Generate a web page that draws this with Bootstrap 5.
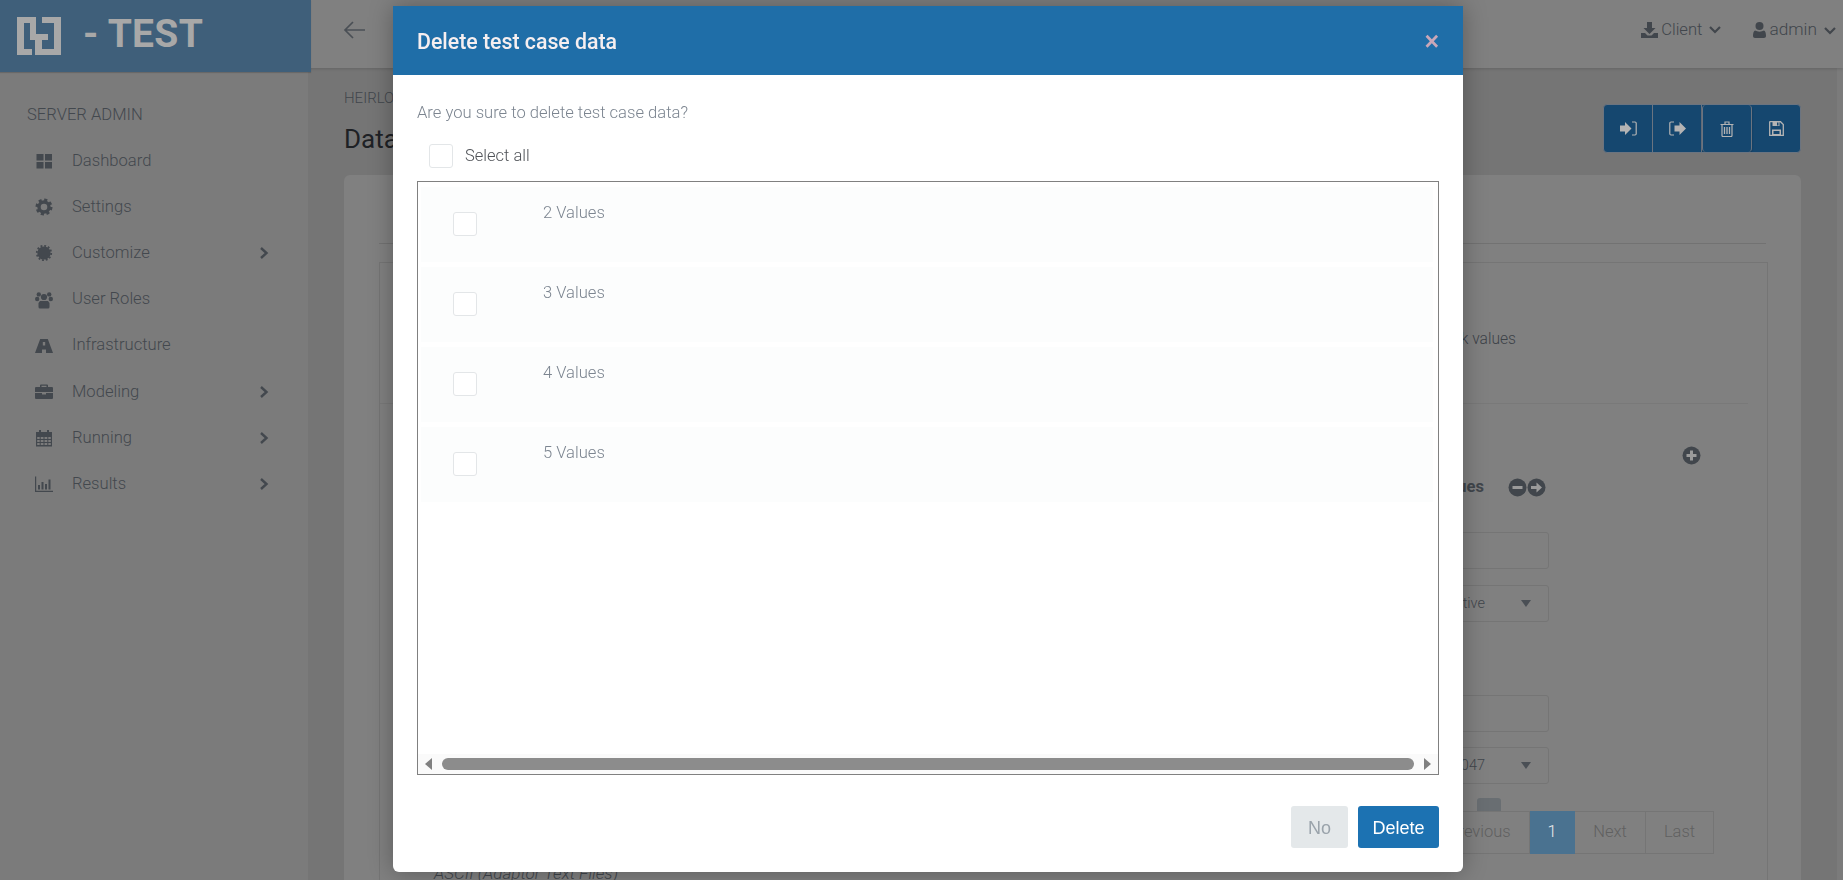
<!DOCTYPE html>
<html lang="en">
<head>
<meta charset="utf-8">
<title>Delete test case data</title>
<link rel="stylesheet" href="https://cdn.jsdelivr.net/npm/bootstrap@5.3.0/dist/css/bootstrap.min.css">
<style>
html,body{height:100%;overflow:hidden}
body{font-family:Roboto,"Liberation Sans",sans-serif;font-weight:300;background:#757575;color:#41464c;font-size:16.5px}
.shell{height:880px;width:1843px}
.leftcol{width:308px;flex:none;background:#7b7b7b;position:relative;z-index:2}
.brandbar{width:311px;height:72px;background:#3f5f7a;padding:0 0 4px 17px;gap:22px;box-shadow:0 1px 1px rgba(0,0,0,.15)}
.brandbar .brandtxt{font-family:Roboto,"Liberation Sans",sans-serif;font-weight:700;font-size:39px;line-height:1;white-space:nowrap;color:#a8a8a8;letter-spacing:.3px}
.logomark{margin-top:4px}
.sidehead{padding:31px 0 0 27px;height:66px;line-height:24px;font-size:16.6px;color:#43484e}
.sideitem{height:46.2px;padding-left:35px;padding-right:39px;color:#43484e;font-size:16.6px}
.sideitem .ico{width:18px;height:18px;margin-right:19px;flex:none;fill:#43484e}
.sideitem .chev{margin-left:auto}
.rightcol{min-width:0;background:#757575;position:relative}
.topnav{height:68px;background:#808080;box-shadow:0 1px 3px rgba(0,0,0,.15);padding:0 7px 8px 30px;color:#41464c;position:relative;z-index:1}
.navbit{font-size:17.3px;gap:3px}
.navbit+.navbit{margin-left:32px}
.clientbit{font-size:16.6px}
.mainpane{padding:0 36px;height:812px;overflow:hidden;border-right:6px solid #7b7b7b}
.titlerow{height:107px}
.crumb{font-size:15px;color:#41464c;padding-top:21px;line-height:18px;white-space:nowrap}
.pagetitle{font-size:26px;font-weight:400;color:#1e2125;margin:15px 0 0;line-height:34px;white-space:nowrap}
.toolgrp{margin-top:36px;height:49px;border:1px solid #6b7480;border-radius:4px;background:#15476f;overflow:hidden;width:198px}
.toolgrp .toolbtn{flex:1;border-right:1px solid #6b7480}
.toolgrp .toolbtn:last-child{border-right:0}
.toolgrp .raisedbtn{border-left:1px solid #6b7480;border-radius:4px;box-shadow:0 1px 2px rgba(0,0,0,.3)}
.panel{background:#808080;border-radius:6px;padding:0 33px 0 35px;height:720px}
.tabline{height:69px;border-bottom:1px solid #727272;width:1387px}
.innerbox{margin-top:18px;border:1px solid #757575;width:1389px;height:650px;padding-right:19px}
.maskrow{height:141px;border-bottom:1px solid #797979;padding:64px 232px 0 0;text-align:right;font-size:15.6px;line-height:24px;color:#3d4248}
.plusrow{height:38px;padding:42px 47px 0 0}
.valuesrow{padding:0 202px 0 0;height:24px;margin-top:29px;margin-bottom:33px;gap:24px}
.valuesrow .boldt{font-weight:700;font-size:16.5px;color:#41464c}
.fieldbox{width:600px;height:37px;border:1px solid #757575;border-radius:3px;margin-right:199px;margin-left:auto;color:#41464c;font-size:14.5px}
.gap16{margin-top:16px}
.gap72{margin-top:73px;margin-bottom:15px}
.fieldval{margin-left:auto;margin-right:36px}
.capret{width:0;height:0;border-left:5px solid transparent;border-right:5px solid transparent;border-top:7px solid #4a4f55;margin-right:17px}
.stub{width:24px;height:13px;background:#696e72;border-radius:3px 3px 0 0;margin-right:247px;margin-left:auto;margin-top:14px}
.pagerrow{margin-right:34px;height:43px}
.pagerrow .pagebit{border:1px solid #757575;border-left:0;display:flex;align-items:center;justify-content:center;height:43px;color:#606060;font-size:16.5px}
.pagebit.onpage{background:#4a7290;color:#eaeaea;border-color:#4a7290}
.asciirow{margin-top:7px}
.asciitxt{font-style:italic;font-size:17px;color:#41464c;padding-left:54px;line-height:24px}
.modal.shownow{display:block}
.sheet{width:1070px;max-width:1070px;margin:6px 0 0 393px}
.sheet .modal-content{height:866px;border:0;border-radius:0 0 6px 6px;box-shadow:0 0 24px rgba(0,0,0,.3);font-family:Roboto,sans-serif}
.sheet .modal-header{height:69px;background:#1f6ea8;border:0;border-radius:0;padding:0 24px}
.sheet .modal-title{color:#f6eff0;font-size:21.3px;font-weight:500;padding-top:3px}
.closex{background:none;border:0;padding:2px 0 0;color:#c9a7b8;font-size:25px;font-weight:700;line-height:1;font-family:"Liberation Sans",sans-serif}
.sheet .modal-body{padding:26px 24px 0;flex:none}
.askline{color:#7c8590;font-size:16.6px;line-height:24px;height:43px}
.tick{width:24px;height:24px;border:1px solid #e3e6e8;border-radius:3px;margin:0;flex:none;background:#fff;appearance:none}
.allrow{height:37px;padding-left:12px;gap:12px;color:#4f5257;font-size:16.5px;align-items:flex-start!important}
.allrow label{line-height:24px}
.listbox{height:594px;border:1px solid #808080;margin-right:-1px;width:1022px}
.listscroll{padding:5px 5px 0 3px;min-height:0;overflow:hidden}
.listrow{height:75px;margin-bottom:5px;background:#fcfdfd;color:#7c8590;font-size:16.6px;line-height:24px}
.listrow .checkcell{width:122px;padding:25px 0 0 32px;flex:none}
.listrow .txtcell{padding-top:14px}
.fakebar{height:20px;background:#fafafa;padding:0 7px;gap:10px;flex:none}
.barthumb{height:12px;border-radius:6px;background:#8c8c8c}
.arrowl{border-top:6px solid transparent;border-bottom:6px solid transparent;border-right:7px solid #808080}
.arrowr{border-top:6px solid transparent;border-bottom:6px solid transparent;border-left:7px solid #808080}
.sheet .modal-footer{border:0;padding:31px 24px 24px 0;gap:10px;margin-top:auto}
.sheet .modal-footer>*{margin:0}
.btn.btnno:disabled{background:#e4e8ea;border:0;color:#9aa3ab;width:57px;height:42px;border-radius:3px;font:400 18px/1 "Liberation Sans",sans-serif;padding:1px 0 0;opacity:1}
.btn.btndel{background:#1c72b2;border:0;color:#fff;width:81px;height:42px;border-radius:3px;font:400 18px/1 "Liberation Sans",sans-serif;padding:1px 0 0}
</style>
</head>
<body>
<div class="shell d-flex">
  <aside class="leftcol">
    <div class="brandbar d-flex align-items-center">
      <svg class="logomark" width="44" height="38" viewBox="0 0 44 38" aria-hidden="true"><path fill="#a8a8a8" d="M0 0h19v17h6V0h19v38H18V23h-5V6H7v26h8v6H0ZM25 6v11h6v6h-6v9h12V6Z"/></svg>
      <span class="brandtxt">- TEST</span>
    </div>
    <div class="sidehead">SERVER ADMIN</div>
    <nav>
      <div class="sideitem d-flex align-items-center"><svg class="ico" viewBox="0 0 18 18"><rect x="1.5" y="2" width="7" height="6.5"/><rect x="10" y="2" width="7" height="6.5"/><rect x="1.5" y="10" width="7" height="6.5"/><rect x="10" y="10" width="7" height="6.5"/></svg>Dashboard</div>
      <div class="sideitem d-flex align-items-center"><svg class="ico" viewBox="0 0 18 18"><circle cx="9" cy="9" r="5" fill="none" stroke="#43484e" stroke-width="3.4"/><circle cx="9" cy="9" r="7.2" fill="none" stroke="#43484e" stroke-width="2.6" stroke-dasharray="3.1 2.55"/></svg>Settings</div>
      <div class="sideitem d-flex align-items-center"><svg class="ico" viewBox="0 0 18 18"><circle cx="9" cy="9" r="6.6"/><circle cx="9" cy="9" r="7.2" fill="none" stroke="#43484e" stroke-width="1.8" stroke-dasharray="1.9 1.87"/></svg>Customize<svg class="chev" width="10" height="14" viewBox="0 0 10 14"><path d="M2 2l5.5 5L2 12" fill="none" stroke="#43484e" stroke-width="2.4"/></svg></div>
      <div class="sideitem d-flex align-items-center"><svg class="ico" viewBox="0 0 18 18"><circle cx="9" cy="6" r="3.1"/><circle cx="3.8" cy="3.4" r="2.2"/><circle cx="14.2" cy="3.4" r="2.2"/><circle cx="2.2" cy="8" r="2.2"/><circle cx="15.800" cy="8" r="2.2"/><path d="M5 10h8l1.500 2v4a1.500 1.500 0 0 1-1.500 1.500H5A1.500 1.500 0 0 1 3.500 16v-4Z"/></svg>User Roles</div>
      <div class="sideitem d-flex align-items-center"><svg class="ico" viewBox="0 0 18 18"><path fill-rule="evenodd" d="M5.200 2h7.600L18 16h-7v-3.500H7V16H0ZM7.800 5v3.500h2.400V5Z"/></svg>Infrastructure</div>
      <div class="sideitem d-flex align-items-center"><svg class="ico" viewBox="0 0 18 18"><path fill-rule="evenodd" d="M6 1.500h6a1 1 0 0 1 1 1V4h4a1 1 0 0 1 1 1v4H0V5a1 1 0 0 1 1-1h4V2.500a1 1 0 0 1 1-1Zm.500 1.300V4h5V2.800ZM0 10h7v1.500h4V10h7v5a1 1 0 0 1-1 1H1a1 1 0 0 1-1-1Z"/></svg>Modeling<svg class="chev" width="10" height="14" viewBox="0 0 10 14"><path d="M2 2l5.500 5L2 12" fill="none" stroke="#43484e" stroke-width="2.400"/></svg></div>
      <div class="sideitem d-flex align-items-center"><svg class="ico" viewBox="0 0 18 18"><path fill-rule="evenodd" d="M1 3h3V1h2v2h6V1h2v2h3v14.500H1Zm1.200 5v2h2.500V8Zm3.500 0v2h2.800V8Zm3.800 0v2h2.800V8Zm3.800 0v2h2.500V8Zm-11.100 3v2h2.500v-2Zm3.500 0v2h2.800v-2Zm3.800 0v2h2.800v-2Zm3.800 0v2h2.500v-2Zm-11.100 3v2h2.500v-2Zm3.500 0v2h2.800v-2Zm3.800 0v2h2.800v-2Zm3.800 0v2h2.500v-2Z"/></svg>Running<svg class="chev" width="10" height="14" viewBox="0 0 10 14"><path d="M2 2l5.500 5L2 12" fill="none" stroke="#43484e" stroke-width="2.400"/></svg></div>
      <div class="sideitem d-flex align-items-center"><svg class="ico" viewBox="0 0 18 18"><path d="M0 1.500h1.200v14.300H18V17H0ZM3 10h2v4.500H3Zm3.500-3h2v7.500h-2ZM10 9h2v5.500h-2Zm3.500-4.500h2v10h-2Z"/></svg>Results<svg class="chev" width="10" height="14" viewBox="0 0 10 14"><path d="M2 2l5.500 5L2 12" fill="none" stroke="#43484e" stroke-width="2.400"/></svg></div>
    </nav>
  </aside>
  <div class="rightcol flex-fill">
    <header class="topnav d-flex align-items-center">
      <svg class="ms-1" width="24" height="20" viewBox="0 0 24 20"><path d="M23 10H3M11 2l-8 8 8 8" fill="none" stroke="#4a4f55" stroke-width="1.700"/></svg>
      <div class="ms-auto d-flex align-items-center">
        <div class="navbit clientbit d-flex align-items-center"><svg width="17" height="16" viewBox="0 0 17 16"><path fill="#41464c" d="M6 0h5v6h3.500L8.500 12 2.500 6H6ZM0 11h4l2.500 2.500h4L13 11h4v5H0Z"/></svg>Client<svg class="ms-1" width="12" height="9" viewBox="0 0 12 9"><path d="M1 2l5 5 5-5" fill="none" stroke="#41464c" stroke-width="2.200"/></svg></div>
        <div class="navbit d-flex align-items-center"><svg width="13" height="16" viewBox="0 0 13 16"><circle cx="6.500" cy="4" r="4" fill="#41464c"/><path fill="#41464c" d="M2 8.500c2.500 1.500 6.500 1.500 9 0 1.500.5 2 3 2 5.500 0 1-.8 2-2 2H2c-1.200 0-2-1-2-2 0-2.500.5-5 2-5.500Z"/></svg>admin<svg class="ms-1" width="12" height="9" viewBox="0 0 12 9"><path d="M1 2l5 5 5-5" fill="none" stroke="#41464c" stroke-width="2.200"/></svg></div>
      </div>
    </header>
    <main class="mainpane">
      <div class="titlerow d-flex justify-content-between">
        <div>
          <div class="crumb">HEIRLOOM</div>
          <h1 class="pagetitle">Data</h1>
        </div>
        <div class="toolgrp d-flex">
          <div class="toolbtn d-flex align-items-center justify-content-center"><svg width="17" height="15" viewBox="0 0 17 15"><path fill="#b4b4b4" d="M0 4.500h5V1l6.500 6.500L5 14v-3.500H0Z"/><path d="M12 1h3a1.200 1.200 0 0 1 1.200 1.200v10.600A1.200 1.200 0 0 1 15 14h-3" fill="none" stroke="#b4b4b4" stroke-width="1.200"/></svg></div>
          <div class="toolbtn d-flex align-items-center justify-content-center"><svg width="17" height="15" viewBox="0 0 17 15"><path fill="#b4b4b4" d="M5.500 4.500h5V1L17 7.500 10.500 14v-3.500h-5Z"/><path d="M5 1H2a1.200 1.200 0 0 0-1.200 1.200v10.600A1.200 1.200 0 0 0 2 14h3" fill="none" stroke="#b4b4b4" stroke-width="1.200"/></svg></div>
          <div class="toolbtn raisedbtn d-flex align-items-center justify-content-center"><svg width="14" height="16" viewBox="0 0 14 16"><path d="M.5 3.500h13M2 3.500v11a1 1 0 0 0 1 1h8a1 1 0 0 0 1-1v-11M5 3.500V1h4v2.500" fill="none" stroke="#b4b4b4" stroke-width="1.200"/><path d="M4.500 6v7M7 6v7M9.500 6v7" fill="none" stroke="#b4b4b4" stroke-width="1.300"/></svg></div>
          <div class="toolbtn d-flex align-items-center justify-content-center"><svg width="15" height="15" viewBox="0 0 15 15"><path fill="none" stroke="#b4b4b4" stroke-width="1.300" d="M1 .700h10.500L14.300 3.500V14.300H.700V1Z"/><path fill="#b4b4b4" d="M3.500 .700h7V5h-7ZM3 8.500h9v5.800H3Z"/><path fill="#15476f" d="M8 1.500h1.500v3H8ZM4.500 10h6v3h-6Z"/></svg></div>
        </div>
      </div>
      <section class="panel">
        <div class="tabline"></div>
        <div class="innerbox">
          <div class="maskrow">Mask values</div>
          <div class="plusrow d-flex justify-content-end"><svg width="19" height="19" viewBox="0 0 19 19"><circle cx="9.500" cy="9.500" r="9" fill="#41464c"/><path d="M4.500 9.500h10M9.500 4.500v10" stroke="#9a9a9a" stroke-width="3"/></svg></div>
          <div class="valuesrow d-flex justify-content-end align-items-center"><span class="boldt">Values</span><span class="d-flex"><svg width="19" height="19" viewBox="0 0 19 19"><circle cx="9.500" cy="9.500" r="9" fill="#41464c"/><path d="M4.500 9.500h10" stroke="#9a9a9a" stroke-width="3"/></svg><svg width="19" height="19" viewBox="0 0 19 19"><circle cx="9.500" cy="9.500" r="9" fill="#41464c"/><path d="M4 8h5.500V4.500L15 9.500 9.500 14.500V11H4Z" fill="#9a9a9a"/></svg></span></div>
          <div class="fieldbox"></div>
          <div class="fieldbox gap16 d-flex align-items-center"><span class="fieldval">Active</span><span class="capret"></span></div>
          <div class="fieldbox gap72"></div>
          <div class="fieldbox d-flex align-items-center"><span class="fieldval">1047</span><span class="capret"></span></div>
          <div class="stub"></div>
          <div class="pagerrow d-flex justify-content-end">
            <div class="pagebit" style="width:100px">Previous</div>
            <div class="pagebit onpage" style="width:45px">1</div>
            <div class="pagebit" style="width:71px">Next</div>
            <div class="pagebit" style="width:68px">Last</div>
          </div>
          <div class="asciirow d-flex"><span class="asciitxt">ASCII (Adaptor Text Files)</span></div>
        </div>
      </section>
    </main>
  </div>
</div>

<div class="modal shownow" tabindex="-1" role="dialog">
  <div class="modal-dialog sheet">
    <div class="modal-content">
      <div class="modal-header d-flex justify-content-between align-items-center">
        <h5 class="modal-title">Delete test case data</h5>
        <button type="button" class="closex" aria-label="Close">×</button>
      </div>
      <div class="modal-body">
        <div class="askline">Are you sure to delete test case data?</div>
        <div class="allrow d-flex align-items-center"><input class="tick" type="checkbox" id="allv"><label for="allv">Select all</label></div>
        <div class="listbox d-flex flex-column">
          <div class="listscroll flex-fill">
            <div class="listrow d-flex"><div class="checkcell"><input class="tick d-block" type="checkbox" aria-label="2 Values"></div><div class="txtcell">2 Values</div></div>
            <div class="listrow d-flex"><div class="checkcell"><input class="tick d-block" type="checkbox" aria-label="3 Values"></div><div class="txtcell">3 Values</div></div>
            <div class="listrow d-flex"><div class="checkcell"><input class="tick d-block" type="checkbox" aria-label="4 Values"></div><div class="txtcell">4 Values</div></div>
            <div class="listrow d-flex"><div class="checkcell"><input class="tick d-block" type="checkbox" aria-label="5 Values"></div><div class="txtcell">5 Values</div></div>
          </div>
          <div class="fakebar d-flex align-items-center"><span class="arrowl"></span><span class="barthumb flex-fill"></span><span class="arrowr"></span></div>
        </div>
      </div>
      <div class="modal-footer">
        <button type="button" class="btn btnno" disabled>No</button>
        <button type="button" class="btn btndel">Delete</button>
      </div>
    </div>
  </div>
</div>
<script src="https://cdn.jsdelivr.net/npm/bootstrap@5.3.0/dist/js/bootstrap.bundle.min.js"></script>
</body>
</html>
